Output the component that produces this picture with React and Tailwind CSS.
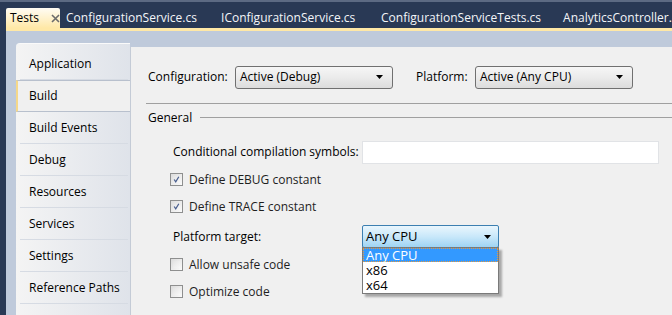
import React from 'react'

const font = { fontFamily: '"Open Sans", "Noto Sans", sans-serif' }

const docTabs = [
  { label: 'ConfigurationService.cs', w: 'w-[155px]' },
  { label: 'IConfigurationService.cs', w: 'w-[160px]' },
  { label: 'ConfigurationServiceTests.cs', w: 'w-[182px]' },
  { label: 'AnalyticsController.cs', w: 'w-[160px]' },
]

const pages = [
  'Application',
  'Build',
  'Build Events',
  'Debug',
  'Resources',
  'Services',
  'Settings',
  'Reference Paths',
  'Signing',
]

const Arrow = () => (
  <svg width="7" height="4" viewBox="0 0 7 4" className="shrink-0">
    <path d="M0 0 H7 L3.5 4 Z" fill="#000" />
  </svg>
)

const Combo = ({ value, width }) => (
  <div
    className={`${width} h-[23px] flex items-center justify-between pl-[4px] pr-[9px] rounded-[3px] border border-[#707070] bg-gradient-to-b from-[#f6f6f6] via-[#ebebeb] to-[#dcdcdc] text-[12px] text-black`}
  >
    <span>{value}</span>
    <Arrow />
  </div>
)

const Check = ({ checked, label }) => (
  <div className="flex items-center h-[27px]">
    <div className="w-[13px] h-[13px] border border-[#8e8f8f] bg-gradient-to-br from-[#dcdcdc] to-[#fbfbfb] p-[2px] flex items-center justify-center">
      <div className="w-full h-full bg-gradient-to-br from-[#e4e4e4] to-[#f8f8f8] flex items-center justify-center">
        {checked && (
          <svg width="9" height="9" viewBox="0 0 9 9">
            <path d="M1.5 4.5 L3.5 7.5 L7.5 1" stroke="#4a5f8f" strokeWidth="1.6" fill="none" />
          </svg>
        )}
      </div>
    </div>
    <span className="ml-[6px] text-[12px] text-[#1e1e1e]">{label}</span>
  </div>
)

export default function App() {
  return (
    <div style={font} className="w-[672px] h-[315px] overflow-hidden bg-[#293955] flex flex-col">
      {/* document tab strip */}
      <div className="h-[28px] shrink-0 flex items-end pl-[6px] border-t-2 border-[#5c6a83]">
        <div className="w-[56px] h-[20px] rounded-t-[2px] bg-gradient-to-b from-[#fffcf4] to-[#ffe8a6] flex items-center pl-[4px] text-[12px] text-black">
          <span>Tests</span>
          <svg width="9" height="9" viewBox="0 0 9 9" className="ml-[12px]">
            <path d="M1 1 L8 8 M8 1 L1 8" stroke="#6b6b6b" strokeWidth="1.6" />
          </svg>
        </div>
        {docTabs.map((t) => (
          <div key={t.label} className={`${t.w} shrink-0 h-[20px] flex items-center pl-[6px] text-[12px] text-[#f4f6f9] whitespace-nowrap`}>
            {t.label}
          </div>
        ))}
      </div>

      <div className="ml-[6px] flex-1 flex flex-col min-h-0">
        <div className="h-[3px] bg-[#ffe8a6] shrink-0" />
        <div className="flex-1 bg-[#bfcadb] pl-[10px] pt-[12px] flex min-h-0">
          {/* property page tabs */}
          <div className="w-[114px] shrink-0 rounded-tl-[4px] bg-gradient-to-r from-[#f4f4f4] to-[#dfe3ea] border-t border-[#fafafa] pt-[4px] flex flex-col">
            {pages.map((p) =>
              p === 'Build' ? (
                <div key={p} className="h-[32px] shrink-0 flex items-center pl-[11px] bg-[#f0f0f0] border-y border-[#b8c0cd] border-l-2 border-l-[#f5d88a] -mr-[1px] text-[12px] text-black">
                  {p}
                </div>
              ) : (
                <div key={p} className="h-[32px] shrink-0 flex items-center pl-[9px] ml-[4px] mr-[2px] border-b border-[#d6dbe3] text-[12px] text-black">
                  {p}
                </div>
              )
            )}
          </div>

          {/* page content */}
          <div className="flex-1 mt-[4px] bg-[#f0f0f0] border-l border-[#c4cbd6] pl-[15px] pt-[18px] text-[12px] text-black">
            <div className="flex items-center h-[24px] pl-[2px]">
              <span className="w-[87px]">Configuration:</span>
              <Combo value="Active (Debug)" width="w-[158px]" />
              <span className="ml-[23px] w-[59px]">Platform:</span>
              <Combo value="Active (Any CPU)" width="w-[158px]" />
            </div>

            <div className="mt-[14px] h-px bg-[#a0a0a0]" />

            <div className="flex items-center h-[27px] pl-[2px]">
              <span>General</span>
              <div className="ml-[8px] flex-1 h-px bg-[#a0a0a0]" />
            </div>

            <div className="pl-[24px]">
              <div className="flex items-center h-[24px] mt-[9px]">
                <span className="w-[192px] pl-[3px]">Conditional compilation symbols:</span>
                <div className="w-[297px] h-[23px] bg-white border border-[#e1e3e6]" />
              </div>

              <div className="mt-[2px]">
                <Check checked label="Define DEBUG constant" />
                <Check checked label="Define TRACE constant" />
              </div>

              <div className="flex items-start h-[30px] mt-[5px]">
                <span className="w-[192px] pl-[3px] mt-[3px]">Platform target:</span>
                <div className="relative">
                  <div className="w-[137px] h-[23px] flex items-center justify-between pl-[3px] pr-[7px] rounded-[2px] border border-[#3c7fb1] bg-gradient-to-b from-[#eaf6fd] via-[#c9e8fa] to-[#9fd4f3]">
                    <span className="text-[13px]">Any CPU</span>
                    <Arrow />
                  </div>
                  <div className="absolute left-0 top-[22px] w-[137px] bg-white border border-[#7a7a7a] shadow-[3px_3px_2px_rgba(0,0,0,0.3)] text-[13px] leading-[15px] z-10">
                    <div className="bg-[#3399ff] text-white border border-dotted border-[#e99a3a] pl-[2px] leading-[12px] h-[14px]">Any CPU</div>
                    <div className="pl-[3px] mt-[1px]">x86</div>
                    <div className="pl-[3px]">x64</div>
                  </div>
                </div>
              </div>

              <div className="-mt-[4px]">
                <Check label="Allow unsafe code" />
                <Check label="Optimize code" />
              </div>
            </div>
          </div>
        </div>
      </div>
    </div>
  )
}
